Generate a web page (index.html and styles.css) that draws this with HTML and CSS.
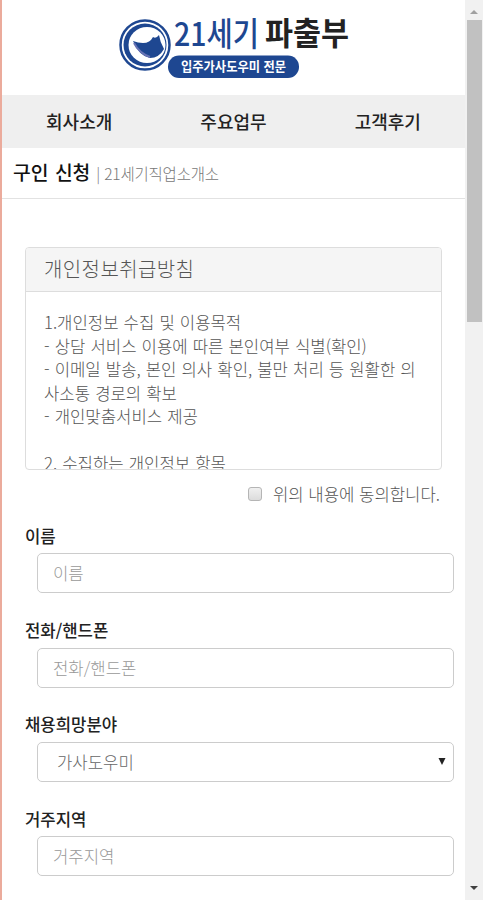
FILE: index.html
```
<!doctype html>
<html lang="ko">
<head>
    <meta charset="UTF-8">
    <meta name="viewport" content="width=device-width, initial-scale=1.0">
    <title>21세기 파출부</title>
    <link rel="stylesheet" href="styles.css">
</head>
<body>
<div class="wrapper">
    <div class="page">
        <header class="header">
            <svg class="logo" width="236" height="64" viewBox="0 0 236 64">
                <circle cx="26" cy="30" r="24.500" fill="none" stroke="#1e4791" stroke-width="2.500"/>
                <circle cx="26" cy="30" r="21.500" fill="#1e4791"/>
                <ellipse cx="28" cy="30" rx="18.500" ry="18" fill="#fff"/>
                <path d="M14 26Q19 28 24 28Q31 28 34 22Q37 24 40 20Q41 27 45 34Q40 43 31 43Q20 41 14 26Z" fill="#1e4791"/>
                <path d="M15 28Q20 38 31 42" fill="none" stroke="#6873b4" stroke-width="2"/>
                <text class="logo-num" x="55" y="30.500" textLength="85" lengthAdjust="spacingAndGlyphs">21세기</text>
                <text class="logo-name" x="146" y="30" textLength="84" lengthAdjust="spacingAndGlyphs">파출부</text>
                <rect x="49" y="40.500" width="131" height="22.500" rx="11" fill="#1e4791"/>
                <text class="logo-sub" x="62" y="56" textLength="105" lengthAdjust="spacingAndGlyphs">입주가사도우미 전문</text>
            </svg>
        </header>
        <nav class="nav">
            <a>회사소개</a>
            <a>주요업무</a>
            <a>고객후기</a>
        </nav>
        <div class="title">
            <h1>구인 신청</h1>
            <span>| 21세기직업소개소</span>
        </div>
        <form class="form">
            <div class="panel">
                <div class="panel-heading">개인정보취급방침</div>
                <div class="panel-body">
                    1.개인정보 수집 및 이용목적<br>
                    - 상담 서비스 이용에 따른 본인여부 식별(확인)<br>
                    - 이메일 발송, 본인 의사 확인, 불만 처리 등 원활한 의<br>사소통 경로의 확보<br>
                    - 개인맞춤서비스 제공<br>
                    <br>
                    2. 수집하는 개인정보 항목
                </div>
            </div>
            <label class="agree"><input type="checkbox"><span>위의 내용에 동의합니다.</span></label>
            <div class="group">
                <label>이름</label>
                <input type="text" placeholder="이름">
            </div>
            <div class="group">
                <label>전화/핸드폰</label>
                <input type="text" placeholder="전화/핸드폰">
            </div>
            <div class="group">
                <label>채용희망분야</label>
                <div class="select">
                    <span>가사도우미</span>
                    <svg width="8" height="7"><path d="M0.500 0h7L4 7z" fill="#222"/></svg>
                </div>
            </div>
            <div class="group">
                <label>거주지역</label>
                <input type="text" placeholder="거주지역">
            </div>
        </form>
    </div>
    <div class="scrollbar">
        <svg class="arrow" width="8" height="4"><path d="M0 4h8L4 0z" fill="#a0a0a0"/></svg>
        <div class="thumb"></div>
        <svg class="arrow down" width="8" height="4"><path d="M0 0h8L4 4z" fill="#404040"/></svg>
    </div>
</div>
</body>
</html>
```
FILE: styles.css
```
* {
    padding: 0;
    margin: 0;
    box-sizing: border-box;
}

body {
    font-family: "Noto Sans CJK KR", sans-serif;
    font-size: 16.700px;
    font-weight: 300;
    color: #555;
    background-color: #fff;
    overflow: hidden;
}

.wrapper {
    display: flex;
    height: 900px;
    border-left: 2px solid #ebab9c;
}

.page {
    flex: 1;
    overflow: hidden;
}

.header {
    height: 95px;
    padding: 15px 0 0 117px;
}

.logo {
    display: block;
    overflow: visible;
}

.logo-num {
    font-size: 33px;
    font-weight: 500;
    fill: #1e4791;
}

.logo-name {
    font-size: 32px;
    font-weight: 700;
    fill: #222;
}

.logo-sub {
    font-size: 13px;
    font-weight: 700;
    fill: #fff;
}

.nav {
    display: flex;
    height: 53px;
    background-color: #efefef;
}

.nav a {
    flex: 1;
    line-height: 52px;
    text-align: center;
    font-size: 18px;
    font-weight: 500;
    color: #222;
}

.title {
    display: flex;
    align-items: baseline;
    height: 51px;
    padding-left: 11px;
    line-height: 48px;
    border-bottom: 1px solid #e2e2e2;
}

.title h1 {
    font-size: 19.300px;
    font-weight: 500;
    color: #111;
    word-spacing: 1px;
}

.title span {
    margin-left: 6px;
    font-size: 15.500px;
    letter-spacing: -0.2px;
    color: #777;
}

.form {
    padding: 48px 11px 0 23px;
}

.panel {
    width: 417px;
    height: 223px;
    overflow: hidden;
    border: 1px solid #ddd;
    border-radius: 4px;
}

.panel-heading {
    height: 44px;
    padding-left: 18px;
    line-height: 42px;
    font-size: 20px;
    letter-spacing: 0.4px;
    background-color: #f5f5f5;
    border-bottom: 1px solid #ddd;
}

.panel-body {
    padding: 19px 0 0 18px;
    line-height: 23.550px;
    white-space: nowrap;
    word-spacing: 0.4px;
}

.agree {
    display: flex;
    justify-content: flex-end;
    align-items: center;
    width: 415px;
    height: 48px;
}

.agree input {
    appearance: none;
    width: 14px;
    height: 14px;
    margin-right: 11px;
    border: 1px solid #b5b5b5;
    border-radius: 3px;
    background-image: linear-gradient(#f0f0f0, #dcdcdc);
}

.group {
    height: 94.200px;
}

.group label {
    display: block;
    height: 35.400px;
    line-height: 36px;
    font-weight: 500;
    color: #222;
}

.group input,
.select {
    display: flex;
    align-items: center;
    justify-content: space-between;
    width: 417px;
    height: 40px;
    margin-left: 12px;
    padding: 0 15px;
    font: inherit;
    color: #666;
    border: 1px solid #ccc;
    border-radius: 5px;
    background-color: #fff;
}

.group input::placeholder {
    color: #999;
}

.select {
    padding: 0 7px 0 19px;
}

.scrollbar {
    display: flex;
    flex-direction: column;
    align-items: center;
    width: 18px;
    padding: 10px 0;
    background-color: #f1f1f1;
}

.thumb {
    width: 15px;
    height: 302px;
    margin: 6px 0 0 1px;
    background-color: #c1c1c1;
}

.down {
    margin-top: auto;
}
```
